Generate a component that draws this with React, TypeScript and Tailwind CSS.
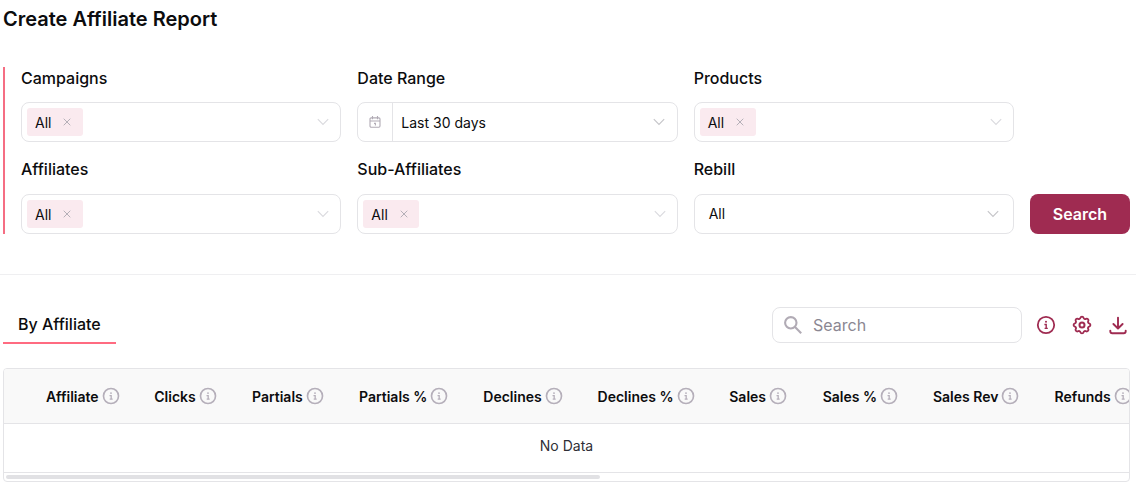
type IconProps = { className?: string };

function InfoIcon({ className }: IconProps) {
  return (
    <svg className={className} viewBox="0 0 24 24" fill="none" stroke="currentColor" strokeWidth="1.8">
      <circle cx="12" cy="12" r="8.2" />
      <path d="M10.4 11.5h1.8v4M10.6 15.4h3.2" strokeWidth="1.4" />
      <circle cx="12" cy="8.8" r="1" fill="currentColor" stroke="none" />
    </svg>
  );
}

function GearIcon() {
  return (
    <svg className="size-6" viewBox="0 0 24 24" fill="none" stroke="currentColor" strokeWidth="2" strokeLinejoin="round">
      <path
        transform="translate(12 12) scale(.93) translate(-12 -12)"
        d="M10.3 4.3c.4-1.7 3-1.7 3.4 0a1.7 1.7 0 0 0 2.6 1.1c1.5-.9 3.3.8 2.4 2.4a1.7 1.7 0 0 0 1 2.5c1.8.5 1.8 3 0 3.4a1.7 1.7 0 0 0-1 2.6c.9 1.5-.9 3.3-2.4 2.4a1.7 1.7 0 0 0-2.6 1c-.4 1.8-3 1.8-3.4 0a1.7 1.7 0 0 0-2.6-1c-1.5.9-3.3-.9-2.4-2.4a1.7 1.7 0 0 0-1-2.6c-1.8-.4-1.8-2.9 0-3.4a1.7 1.7 0 0 0 1-2.5c-.9-1.6.9-3.3 2.4-2.4 1 .6 2.3.1 2.6-1.1Z"
      />
      <circle cx="12" cy="12" r="2.5" />
    </svg>
  );
}

function DownloadIcon() {
  return (
    <svg className="size-6" viewBox="0 0 24 24" fill="none" stroke="currentColor" strokeWidth="1.9" strokeLinecap="round" strokeLinejoin="round">
      <path d="M12 4.6v10.8M7.4 11l4.6 4.5 4.6-4.5M4.3 17.6v.6a2 2 0 0 0 2 2h11.4a2 2 0 0 0 2-2v-.6" />
    </svg>
  );
}

function CalendarIcon() {
  return (
    <svg className="size-3" viewBox="0 0 12 12" fill="none" stroke="currentColor" strokeWidth="1.1">
      <rect x="1" y="1.9" width="10" height="9.4" rx="1.2" />
      <path d="M1 5h10M3.5 0v3.2M8.5 0v3.2M5 7.4h1.4v2.2" />
    </svg>
  );
}

function Chevron({ className }: IconProps) {
  return (
    <svg className={className} width="12" height="8" viewBox="0 0 12 8" fill="none" stroke="currentColor" strokeWidth="1.1">
      <path d="M.8 1.2 6 6.4l5.2-5.2" />
    </svg>
  );
}

function Field({ label, children }: { label: string; children: React.ReactNode }) {
  return (
    <div>
      <div className="text-base leading-[23px] font-medium">{label}</div>
      <div className="flex h-10 items-center rounded-lg border border-[#e4e4e7]">{children}</div>
    </div>
  );
}

function TagSelect({ label }: { label: string }) {
  return (
    <Field label={label}>
      <div className="ml-[5px] flex h-7 w-14 items-center rounded-[3px] bg-[#faeaef] pl-2 text-sm">
        <span className="pt-px">All</span>
        <svg className="ml-3 size-2 text-[#b5b0b8]" viewBox="0 0 8 8" stroke="currentColor" strokeWidth="1">
          <path d="m.7.7 6.6 6.6M7.3.7.7 7.3" />
        </svg>
      </div>
      <Chevron className="mr-[11px] ml-auto text-[#dadade]" />
    </Field>
  );
}

const columns = [
  { name: "Affiliate", width: "w-[108.3px]" },
  { name: "Clicks", width: "w-[97.7px]" },
  { name: "Partials", width: "w-[107px]" },
  { name: "Partials %", width: "w-[124.3px]" },
  { name: "Declines", width: "w-[114.3px]" },
  { name: "Declines %", width: "w-[131.7px]" },
  { name: "Sales", width: "w-[93.4px]" },
  { name: "Sales %", width: "w-[110.3px]" },
  { name: "Sales Rev", width: "w-[121.5px]" },
  { name: "Refunds", width: "w-[110px]" },
];

export default function App() {
  return (
    <main className="h-[484px] overflow-hidden bg-white font-['Inter',sans-serif] text-[#0c0c0e]">
      <h1 className="h-[67px] pt-[5px] pl-[3px] text-xl leading-7 font-semibold">Create Affiliate Report</h1>

      <section className="mr-1.5 ml-[3px] flex h-[167px] items-end gap-4 border-l-2 border-[#f56e83] pl-4">
        <div className="grid h-full flex-1 grid-cols-3 grid-rows-[75px_76px] content-between gap-x-4 *:flex *:flex-col *:justify-between">
          <TagSelect label="Campaigns" />
          <Field label="Date Range">
            <div className="flex h-full w-[35px] items-center justify-center border-r border-[#e4e4e7] text-[#b1abb5]">
              <CalendarIcon />
            </div>
            <span className="pt-px pl-2 text-sm">Last 30 days</span>
            <Chevron className="mr-3 ml-auto text-[#c4c4c8]" />
          </Field>
          <TagSelect label="Products" />
          <TagSelect label="Affiliates" />
          <TagSelect label="Sub-Affiliates" />
          <Field label="Rebill">
            <span className="pl-3.5 text-sm">All</span>
            <Chevron className="mr-3.5 ml-auto text-[#c4c4c8]" />
          </Field>
        </div>
        <button className="h-10 w-[100px] rounded-lg bg-[#9f2b51] font-semibold text-white">Search</button>
      </section>

      <div className="mt-10 border-t border-[#efeff1]" />

      <section className="mr-1.5 ml-[3px] flex h-[69px] items-end">
        <div className="h-[39px] w-[113px] border-b-2 border-[#ff6b81] pl-[15px] text-base leading-[38px] font-medium">By Affiliate</div>
        <div className="mb-px ml-auto flex h-9 w-[250px] items-center rounded-lg border border-[#e4e4e7] text-[#8b8792]">
          <svg className="ml-[11px] size-[18px] text-[#b1abb5]" viewBox="0 0 18 18" fill="none" stroke="currentColor" strokeWidth="2.1">
            <circle cx="6.8" cy="6.8" r="5.7" />
            <path d="m11 11 6.2 6.2" />
          </svg>
          <span className="ml-[11px]">Search</span>
        </div>
        <div className="mb-[7px] ml-3 flex w-24 gap-3 text-[#9f2b51]">
          <InfoIcon className="size-6" />
          <GearIcon />
          <DownloadIcon />
        </div>
      </section>

      <section className="mt-6 mr-1.5 ml-[3px] h-[114px] overflow-hidden rounded-[4px] border border-[#e4e4e7]">
        <div className="flex h-[55px] items-center border-b border-[#e4e4e7] bg-[#f9f9f9] pl-[42px]">
          {columns.map((column) => (
            <div key={column.name} className={`${column.width} flex shrink-0 items-center gap-px text-sm font-semibold whitespace-nowrap`}>
              <span className="pt-0.5">{column.name}</span>
              <InfoIcon className="size-[22px] text-[#b5afba]" />
            </div>
          ))}
        </div>
        <div className="flex h-[49px] items-center justify-center border-b border-[#e4e4e7] text-sm text-[#2f2f36]">
          <span className="-mt-1">No Data</span>
        </div>
        <div className="mt-0.5 ml-0.5 h-1 w-[594px] rounded-full bg-[#e1e1e4]" />
      </section>
    </main>
  );
}
